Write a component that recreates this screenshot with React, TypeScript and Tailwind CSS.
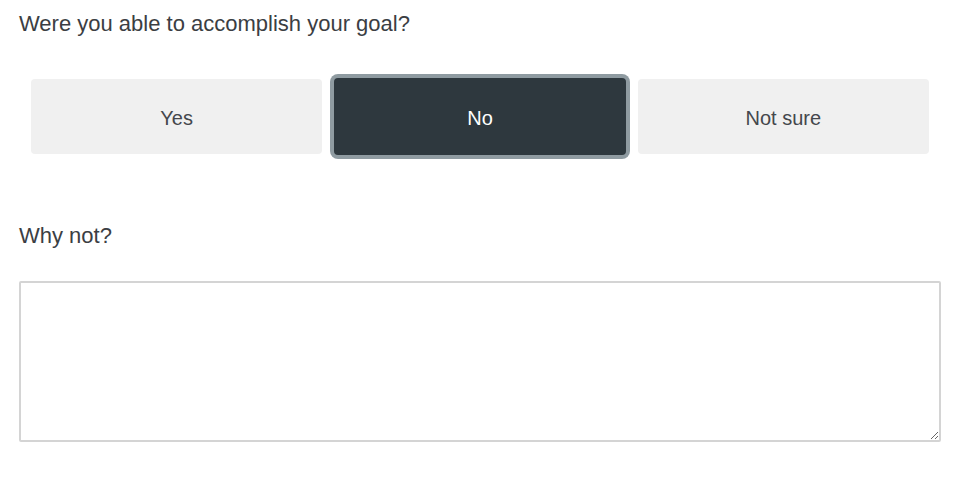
export default function App() {
  return (
    <div className="min-h-screen bg-white pl-[19px] pr-[25px] pt-[9px] text-[#3b3e43]" style={{ fontFamily: '"Liberation Sans", Arial, sans-serif' }}>
      <p className="text-[22px] leading-[30px]">Were you able to accomplish your goal?</p>

      <div className="mt-[40px] grid grid-cols-3 gap-[12px] px-[12px]">
        <button className="h-[75px] rounded-[4px] bg-[#f0f0f0] pt-[3px] text-[20px] text-[#44474c]">Yes</button>
        <button className="h-[77px] -my-[1px] rounded-[4px] bg-[#2e383e] pt-[3px] text-[20px] text-white ring-[4px] ring-[#8f9ba1]">No</button>
        <button className="h-[75px] rounded-[4px] bg-[#f0f0f0] pt-[3px] text-[20px] text-[#44474c]">Not sure</button>
      </div>

      <p className="mt-[67px] text-[22px] leading-[30px]">Why not?</p>

      <textarea className="mt-[30px] block h-[161px] w-full rounded-[2px] border-2 border-[#d4d4d4] p-2 text-[18px] outline-none" />
    </div>
  );
}
